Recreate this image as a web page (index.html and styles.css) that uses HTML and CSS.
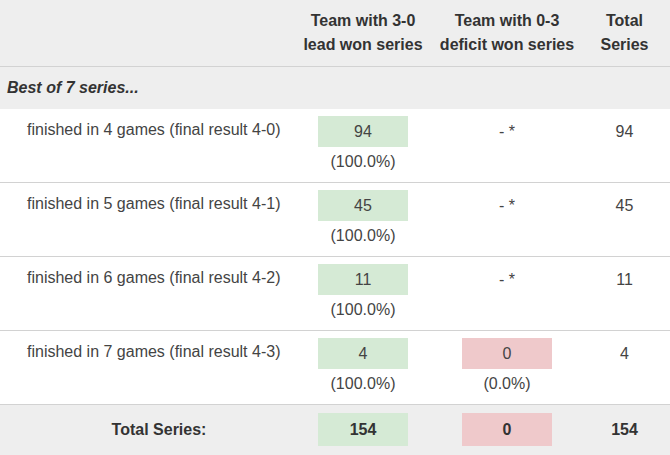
FILE: index.html
```html
<!DOCTYPE html>
<html>
<head>
<meta charset="utf-8">
<link rel="stylesheet" href="styles.css">
</head>
<body>
<table class="stats">
  <colgroup>
    <col class="c-label"><col class="c-num"><col class="c-num"><col class="c-total">
  </colgroup>
  <thead>
    <tr class="head">
      <th></th>
      <th>Team with 3-0<br>lead won series</th>
      <th>Team with 0-3<br>deficit won series</th>
      <th>Total<br>Series</th>
    </tr>
  </thead>
  <tbody>
    <tr class="group"><td colspan="4">Best of 7 series...</td></tr>
    <tr class="row">
      <td class="label">finished in 4 games (final result 4-0)</td>
      <td><div class="box green">94</div><div class="pct">(100.0%)</div></td>
      <td><div class="plain">- *</div></td>
      <td><div class="plain">94</div></td>
    </tr>
    <tr class="row">
      <td class="label">finished in 5 games (final result 4-1)</td>
      <td><div class="box green">45</div><div class="pct">(100.0%)</div></td>
      <td><div class="plain">- *</div></td>
      <td><div class="plain">45</div></td>
    </tr>
    <tr class="row">
      <td class="label">finished in 6 games (final result 4-2)</td>
      <td><div class="box green">11</div><div class="pct">(100.0%)</div></td>
      <td><div class="plain">- *</div></td>
      <td><div class="plain">11</div></td>
    </tr>
    <tr class="row">
      <td class="label">finished in 7 games (final result 4-3)</td>
      <td><div class="box green">4</div><div class="pct">(100.0%)</div></td>
      <td><div class="box red">0</div><div class="pct">(0.0%)</div></td>
      <td><div class="plain">4</div></td>
    </tr>
    <tr class="foot">
      <td class="flabel">Total Series:</td>
      <td><div class="box green big">154</div></td>
      <td><div class="box red big">0</div></td>
      <td><div class="plain big">154</div></td>
    </tr>
  </tbody>
</table>
</body>
</html>
```
FILE: styles.css
```css
html, body {
  margin: 0;
  padding: 0;
  background: #ffffff;
}
body {
  font-family: "Liberation Sans", Arial, sans-serif;
  font-size: 16px;
  color: #444;
}
.stats {
  border-collapse: collapse;
  table-layout: fixed;
  width: 670px;
}
.c-label { width: 291px; }
.c-num { width: 144px; }
.c-total { width: 91px; }

.head th {
  background: #eeeeee;
  color: #333;
  font-weight: bold;
  line-height: 24px;
  padding: 9px 0 9px;
  text-align: center;
  vertical-align: bottom;
  border-bottom: 1px solid #d2d2d2;
  white-space: nowrap;
}
.group td {
  background: #eeeeee;
  color: #333;
  font-weight: bold;
  font-style: italic;
  height: 42px;
  padding: 0 0 0 7px;
  box-sizing: border-box;
  vertical-align: middle;
}
.row td {
  padding: 7px 0 8px;
  text-align: center;
  vertical-align: top;
  border-bottom: 1px solid #d2d2d2;
}
.row td.label {
  text-align: left;
  padding-left: 27px;
  padding-top: 9px;
  line-height: 24px;
}
.box {
  width: 90px;
  height: 31px;
  line-height: 31px;
  margin: 0 auto;
}
.green { background: #d5ead5; }
.red { background: #efc9cb; }
.plain {
  height: 31px;
  line-height: 31px;
}
.pct {
  line-height: 24px;
  padding-top: 3px;
}
.foot td {
  background: #eeeeee;
  padding: 8px 0 9px;
  text-align: center;
  vertical-align: top;
  color: #333;
  font-weight: bold;
}
.foot td.flabel {
  padding-left: 27px;
  line-height: 33px;
}
.box.big, .plain.big {
  height: 33px;
  line-height: 33px;
}
```
